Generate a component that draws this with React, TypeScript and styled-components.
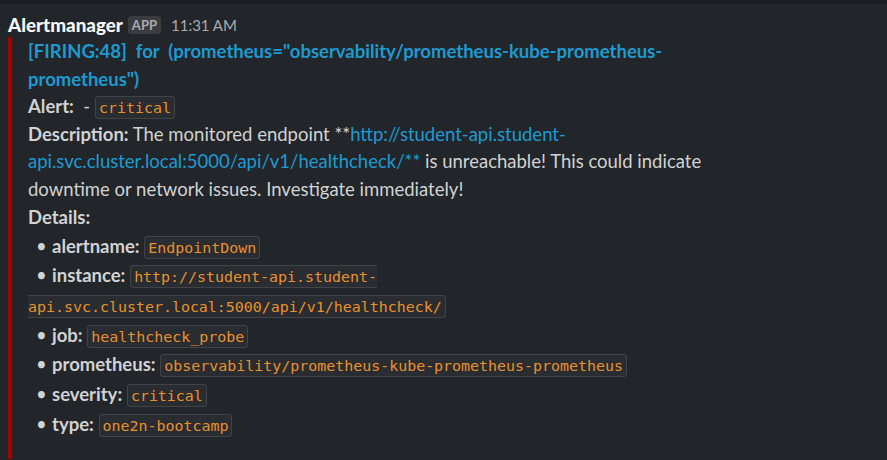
import React from "react";
import styled, { createGlobalStyle } from "styled-components";

const Global = createGlobalStyle`
  html, body { margin: 0; padding: 0; background: #222529; }
  body { font-family: Lato, "Noto Sans", sans-serif; color: #d1d2d3; }
`;

const Page = styled.div`
  width: 887px;
  height: 460px;
  overflow: hidden;
  background: #222529;
`;

const TopStrip = styled.div`
  height: 4px;
  background: #1a1d21;
`;

const Header = styled.div`
  display: flex;
  align-items: center;
  gap: 5px;
  padding: 8px 0 0 8px;
  height: 25px;
`;

const Sender = styled.span`
  font-weight: 900;
  font-size: 18.8px;
  color: #f8f8f8;
`;

const Badge = styled.span`
  background: #3a3c40;
  color: #ababad;
  font-size: 13px;
  font-weight: 700;
  border-radius: 3px;
  padding: 1px 4px;
  line-height: 16px;
`;

const Time = styled.span`
  margin-left: 5px;
  color: #ababad;
  font-size: 15px;
`;

const Attachment = styled.div`
  margin: 0 0 0 8px;
  border-left: 4px solid #a30200;
  padding: 0 0 20px 16px;
  width: 722px;
  font-size: 18.5px;
  line-height: 27.7px;
`;

const Title = styled.div`
  color: #1d9bd1;
  font-weight: 700;
  line-height: 28px;
  white-space: pre-wrap;
`;

const Line = styled.div`
  line-height: 27.7px;
`;

const Item = styled.div`
  line-height: 29.7px;
`;

const Bullet = styled.span`
  display: inline-block;
  margin-left: 8px;
  width: 16px;
`;

const Label = styled.b`
  font-weight: 700;
`;

const Link = styled.span`
  color: #1d9bd1;
`;

const Code = styled.code`
  font-family: "DejaVu Sans Mono", "Liberation Mono", monospace;
  font-size: 14.95px;
  line-height: 16px;
  color: #e8912d;
  background: rgba(232, 232, 232, 0.04);
  border: 1px solid rgba(232, 232, 232, 0.13);
  border-radius: 3px;
  padding: 2px 3px 1px;
`;

const details: [string, string][] = [
  ["alertname", "EndpointDown"],
  ["instance", "http://student-api.student-api.svc.cluster.local:5000/api/v1/healthcheck/"],
  ["job", "healthcheck_probe"],
  ["prometheus", "observability/prometheus-kube-prometheus-prometheus"],
  ["severity", "critical"],
  ["type", "one2n-bootcamp"],
];

export default function App() {
  return (
    <Page>
      <Global />
      <TopStrip />
      <Header>
        <Sender>Alertmanager</Sender>
        <Badge>APP</Badge>
        <Time>11:31 AM</Time>
      </Header>
      <Attachment>
        <Title>{'[FIRING:48]  for  (prometheus="observability/prometheus-kube-prometheus-prometheus")'}</Title>
        <Line>
          <Label>Alert:</Label> &nbsp;- <Code>critical</Code>
        </Line>
        <Line>
          <Label>Description:</Label> The monitored endpoint **
          <Link>http://student-api.student-api.svc.cluster.local:5000/api/v1/healthcheck/**</Link> is
          unreachable! This could indicate downtime or network issues. Investigate immediately!
        </Line>
        <Line>
          <Label>Details:</Label>
        </Line>
        {details.map(([k, v]) => (
          <Item key={k}>
            <Bullet>•</Bullet>
            <Label>{k}:</Label> <Code>{v}</Code>
          </Item>
        ))}
      </Attachment>
    </Page>
  );
}
